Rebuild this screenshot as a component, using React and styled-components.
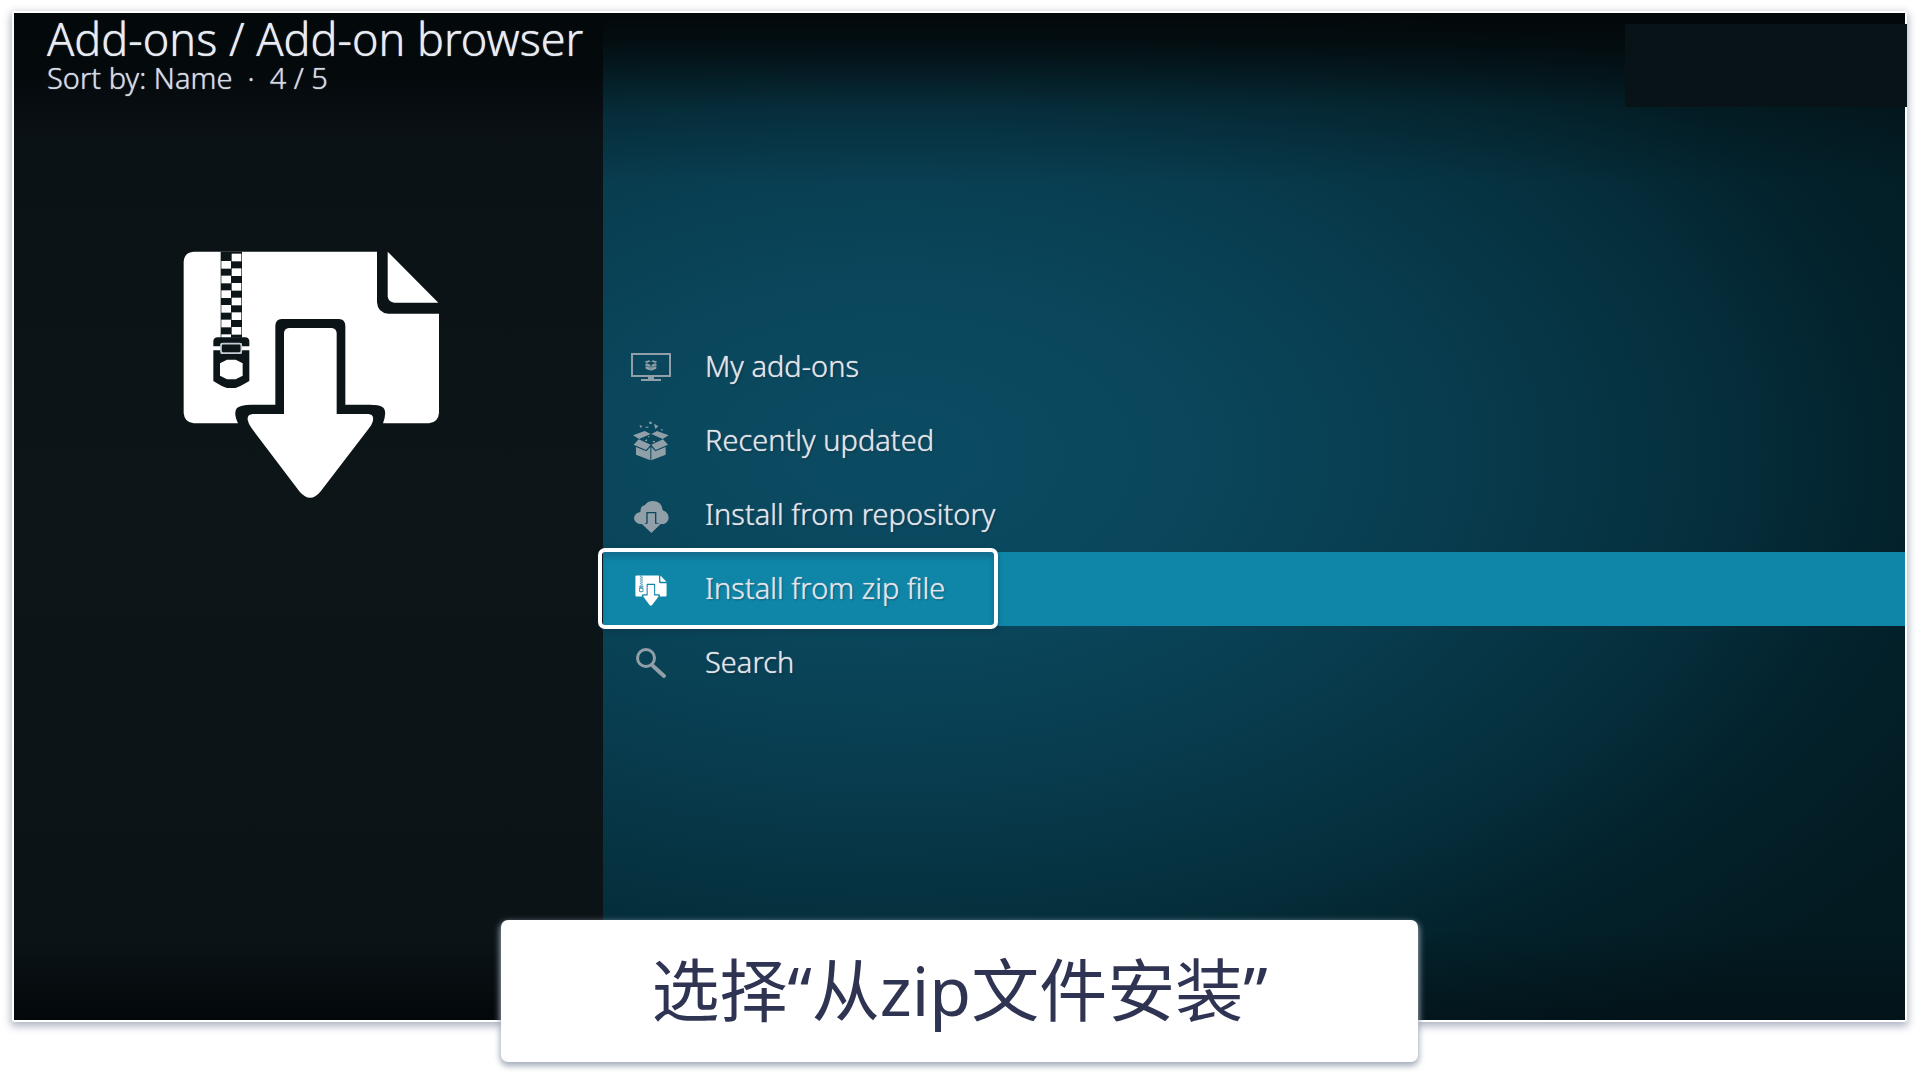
import styled, { createGlobalStyle } from "styled-components";

const GlobalStyle = createGlobalStyle`
  * {
    box-sizing: border-box;
  }

  body {
    margin: 0;
    background: #fff;
    font-family: "Noto Sans", "Open Sans", sans-serif;
  }
`;

const Page = styled.main`
  min-height: 100vh;
  display: flex;
  flex-direction: column;
  padding: 13px 14px 17px;
`;

const Screen = styled.section`
  flex: 1;
  display: grid;
  grid-template-columns: minmax(0, 589fr) minmax(0, 1302fr);
  background: #04161d;
  border-radius: 1px;
  box-shadow:
    0 0 0 2px #fff,
    0 3px 8px 3px #a9b0bf;
`;

const Sidebar = styled.aside`
  display: flex;
  flex-direction: column;
  align-items: center;
  padding: 0 27px 0 33px;
  background: linear-gradient(
    #03080b 0,
    #04090c 60px,
    #0b1216 130px,
    #0c1518 50%,
    #0b1317 92%,
    #03080a 100%
  );
`;

const Header = styled.header`
  width: 100%;
  white-space: nowrap;
`;

const Title = styled.h1`
  margin: 0;
  font-size: 45px;
  font-weight: 300;
  line-height: 51px;
  color: #e8ecf2;
  text-shadow: 0 0 1px #e8ecf2;
`;

const SortInfo = styled.p`
  margin: 0;
  font-size: 29px;
  font-weight: 300;
  line-height: 27px;
  color: #d3dae3;
  text-shadow: 0 0 1px #d3dae3;
  white-space: pre;
`;

const LargeIcon = styled.svg`
  width: 257px;
  height: 247px;
  margin-top: 160px;
`;

const Content = styled.div`
  display: grid;
  grid-template-rows: 1fr auto 1fr;
  padding-bottom: 4px;
  background:
    linear-gradient(
      rgba(3, 8, 10, 1) 0,
      rgba(3, 8, 10, 0.85) 30px,
      rgba(3, 8, 10, 0.25) 95px,
      rgba(3, 8, 10, 0) 170px
    ),
    linear-gradient(to top, rgba(3, 10, 13, 0.4) 0, rgba(3, 10, 13, 0) 90px),
    radial-gradient(
      ellipse 86% 64% at 22% 44%,
      #0b4b62 0,
      #0a475d 25%,
      #083c4e 50%,
      #052e3b 75%,
      #03222c 90%,
      #031a21 110%
    );
`;

const StatusBox = styled.div`
  justify-self: end;
  width: 282px;
  height: 83px;
  margin: 11px -2px 0 0;
  background: #081318;
`;

const Menu = styled.nav`
  display: flex;
  flex-direction: column;
`;

const MenuItem = styled.button`
  position: relative;
  display: flex;
  align-items: center;
  gap: 30px;
  height: 74px;
  padding: 0 24px;
  border: 0;
  background: ${({ $active }) => ($active ? "#0f86a8" : "transparent")};
  color: ${({ $active }) => ($active ? "#fff" : "#919fa9")};
  font-family: inherit;
  text-align: left;
  cursor: pointer;
`;

const MenuIcon = styled.svg`
  flex: none;
  width: 48px;
  height: 48px;
`;

const MenuLabel = styled.span`
  padding-bottom: 2px;
  font-size: 29px;
  font-weight: 300;
  line-height: 40px;
  color: #dfe3ea;
  text-shadow:
    0 0 1px #dfe3ea,
    1px 1px 2px rgba(0, 0, 0, 0.4);
`;

const Highlight = styled.span`
  position: absolute;
  top: -4px;
  left: -5px;
  width: 400px;
  height: 81px;
  border: 4px solid #fff;
  border-radius: 7px;
  box-shadow:
    inset 0 5px 6px rgba(30, 50, 80, 0.3),
    0 2px 5px rgba(20, 40, 60, 0.4);
`;

const Caption = styled.p`
  position: relative;
  align-self: center;
  margin: -100px 0 0;
  padding: 22px 150px 24px;
  border-radius: 7px;
  background: #fff;
  box-shadow: 0 3px 6px 1px #a3abba;
  color: #2f3452;
  font-family: "Noto Sans", "Noto Sans CJK SC", sans-serif;
  font-size: 68px;
  line-height: 96px;
  white-space: nowrap;
`;

const teeth = [0, 1, 2, 3, 4, 5];

function ZipGlyph({ dark }) {
  return (
    <>
      <path
        fill="currentColor"
        d="M72 36H622V188Q624 220 656 222H808V520Q806 548 778 551H640Q654 512 638 502Q628 495 600 495H527V258Q526 239 508 238H336Q318 239 317 258V495H245Q212 496 202 505Q190 518 205 551H72Q44 548 42 520V66Q44 38 72 36Z"
      />
      <path fill="currentColor" d="M654 36L806 189H674Q656 188 654 170Z" />
      <path
        fill="currentColor"
        d="M343 523V280Q344 266 358 265H486Q500 266 501 280V523H596Q615 524 609 546Q606 556 598 566L452 756Q422 792 390 756L246 566Q236 552 234 540Q232 524 250 523Z"
      />
      <rect x="153" y="36" width="64" height="258" fill={dark} />
      {teeth.map((n) => (
        <g key={n} fill="currentColor">
          <rect x="155" y={64 + n * 44} width="29" height="23" />
          <rect x="186" y={42 + n * 44} width="29" height="23" />
        </g>
      ))}
      <path
        fill={dark}
        d="M131 320V304Q132 294 144 293H226Q238 294 239 304V320H216V311H153V320ZM131 332H153V342H216V332H239V424Q212 440 197 445H172Q156 440 131 424Z"
      />
      <rect
        x="154"
        y="312"
        width="61"
        height="28"
        rx="6"
        fill={dark}
        stroke="#c3ccd6"
        strokeWidth="5"
      />
      <path
        fill="currentColor"
        d="M151 371L172 360H198L219 371V408L198 419H172L151 408Z"
      />
    </>
  );
}

function BoxGlyph() {
  return (
    <path
      fill="currentColor"
      d="M27 55L62 42L80 51L45 66ZM134 55L99 42L82 51L116 66ZM44 67L80 83L66 99L29 83ZM117 67L82 83L95 99L132 83ZM36 90L67 103L79 90V130L36 113ZM125 90L94 103L82 90V130L125 113Z"
    />
  );
}

function MonitorIcon() {
  return (
    <MenuIcon viewBox="0 0 48 48" aria-hidden="true">
      <rect
        x="5"
        y="11"
        width="38"
        height="22"
        fill="none"
        stroke="currentColor"
        strokeWidth="2"
      />
      <path fill="currentColor" d="M21 34H27V36H34V38H14V36H21Z" />
      <g transform="translate(14.300 12.100) scale(0.120)">
        <BoxGlyph />
      </g>
    </MenuIcon>
  );
}

function OpenBoxIcon() {
  return (
    <MenuIcon viewBox="9 0 144 144" aria-hidden="true">
      <BoxGlyph />
      <path
        fill="currentColor"
        d="M76 14h7v7h-7zM46 24l9 3l-5 6zM90 20l13 8l-9 8zM65 29h8v3h-8zM110 36l8 2l-5 3zM62 71l7-5v7zM86 72h7v4h-7zM72 58h4v3h-4z"
      />
    </MenuIcon>
  );
}

function CloudIcon() {
  return (
    <MenuIcon viewBox="9 3 144 144" aria-hidden="true">
      <path
        fill="currentColor"
        d="M50 58Q52 48 62 46Q70 33 88 33Q114 35 116 61Q134 67 134 84Q132 98 120 102H108L97 98V66H67V98L60 102H46Q31 98 30 84Q32 69 49 66Z"
      />
      <path fill="currentColor" d="M71 70H93V101H111L82 129L53 101H71Z" />
    </MenuIcon>
  );
}

function ZipIcon() {
  return (
    <MenuIcon viewBox="-165 -165 1180 1180" aria-hidden="true">
      <g transform="translate(0 60)">
        <ZipGlyph dark="#3f93ae" />
      </g>
    </MenuIcon>
  );
}

function SearchIcon() {
  return (
    <MenuIcon viewBox="0 0 48 48" aria-hidden="true">
      <g fill="none" stroke="currentColor" strokeLinecap="round">
        <circle cx="19" cy="19" r="8.500" strokeWidth="3" />
        <path strokeWidth="4" d="M26 27L37 37" />
      </g>
    </MenuIcon>
  );
}

const items = [
  { label: "My add-ons", Icon: MonitorIcon },
  { label: "Recently updated", Icon: OpenBoxIcon },
  { label: "Install from repository", Icon: CloudIcon },
  { label: "Install from zip file", Icon: ZipIcon, active: true },
  { label: "Search", Icon: SearchIcon },
];

function App() {
  return (
    <>
      <GlobalStyle />
      <Page>
        <Screen>
          <Sidebar>
            <Header>
              <Title>Add-ons / Add-on browser</Title>
              <SortInfo>Sort by: Name{"  ·  "}4 / 5</SortInfo>
            </Header>
            <LargeIcon
              viewBox="40 34 771 741"
              color="#fff"
              role="img"
              aria-label="Install from zip file"
            >
              <ZipGlyph dark="#0c1518" />
            </LargeIcon>
          </Sidebar>

          <Content>
            <StatusBox />
            <Menu aria-label="Add-on browser">
              {items.map(({ label, Icon, active }) => (
                <MenuItem
                  key={label}
                  type="button"
                  $active={active}
                  aria-current={active}
                >
                  <Icon />
                  <MenuLabel>{label}</MenuLabel>
                  {active && <Highlight />}
                </MenuItem>
              ))}
            </Menu>
          </Content>
        </Screen>

        <Caption lang="zh-CN">选择“从zip文件安装”</Caption>
      </Page>
    </>
  );
}

export default App;
